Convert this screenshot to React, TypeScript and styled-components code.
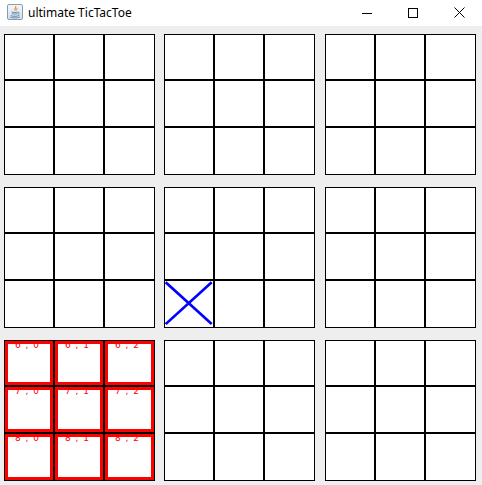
import React from 'react';
import styled, { createGlobalStyle } from 'styled-components';

const Global = createGlobalStyle`
  html, body { margin: 0; padding: 0; background: #eeeeee; }
  body { width: 482px; height: 485px; overflow: hidden; font-family: "Noto Sans", sans-serif; }
`;

const Window = styled.div`
  width: 482px;
  height: 485px;
  display: flex;
  flex-direction: column;
  background: #eeeeee;
`;

const TitleBar = styled.div`
  height: 26px;
  flex-shrink: 0;
  background: #ffffff;
  display: flex;
  align-items: center;
`;

const AppIcon = styled.svg`
  width: 16px;
  height: 16px;
  margin-left: 7px;
  margin-top: -2px;
  flex-shrink: 0;
`;

const Title = styled.span`
  margin-left: 5px;
  margin-top: -1px;
  font-family: "Noto Sans", "Open Sans", sans-serif;
  font-size: 12px;
  color: #000000;
  flex: 1;
`;

const Controls = styled.div`
  display: flex;
  align-self: flex-start;
`;

const CtrlButton = styled.div`
  width: 46px;
  height: 25px;
  display: flex;
  align-items: center;
  justify-content: center;
  svg { display: block; }
`;

const Board = styled.div`
  display: grid;
  grid-template-columns: 160px 161px 151px;
  grid-template-rows: repeat(3, 141px);
  row-gap: 12px;
  padding: 8px 0 0 4px;
`;

const SubBoard = styled.div`
  width: 151px;
  height: 141px;
  display: grid;
  grid-template-columns: 50px 50px 51px;
  grid-template-rows: 46px 47px 48px;
`;

const Cell = styled.div<{ $active?: boolean }>`
  box-sizing: border-box;
  border: 1px solid #000000;
  background: #ffffff;
  position: relative;
  overflow: hidden;
  ${(p) =>
    p.$active
      ? `&::after {
          content: "";
          position: absolute;
          inset: 0;
          border: 3px solid #ff0000;
          pointer-events: none;
        }`
      : ''}
`;

const CellLabel = styled.div`
  font-family: "DejaVu Sans", sans-serif;
  font-size: 9px;
  line-height: 9px;
  word-spacing: 2px;
  color: #ff0000;
  padding-left: 10px;
  white-space: pre;
`;

const Mark = styled.svg`
  display: block;
  width: 100%;
  height: 100%;
`;

const XMark = () => (
  <Mark viewBox="0 0 48 46" preserveAspectRatio="none">
    <line x1="0.7" y1="1.3" x2="46.7" y2="43" stroke="#0000ff" strokeWidth="2.6" />
    <line x1="46.7" y1="1.3" x2="0.7" y2="43" stroke="#0000ff" strokeWidth="2.6" />
  </Mark>
);

const JavaIcon = () => (
  <AppIcon viewBox="0 0 16 16">
    <defs>
      <linearGradient id="jbg" x1="0" y1="0" x2="0" y2="1">
        <stop offset="0" stopColor="#f4f7fb" />
        <stop offset="1" stopColor="#d5dfea" />
      </linearGradient>
    </defs>
    <rect x="0.5" y="0.5" width="15" height="15" rx="1.5" fill="url(#jbg)" stroke="#8a9bb0" />
    <path d="M8.6 2.2 C10 3.6 7 4.6 8.2 6.4 C6.6 5.2 9.4 4.2 8.6 2.2 Z" fill="#e76f00" stroke="#e76f00" strokeWidth="0.6" />
    <path d="M10.3 4 C9.4 4.8 9.8 5.6 9.2 6.5" fill="none" stroke="#e76f00" strokeWidth="0.8" />
    <path d="M4.5 8 C6.5 8.6 9.5 8.6 11 8" fill="none" stroke="#5382a1" strokeWidth="0.9" />
    <path d="M4.8 9.6 C6.6 10.2 9.2 10.2 10.6 9.6" fill="none" stroke="#5382a1" strokeWidth="0.9" />
    <path d="M3.6 11.6 C6 12.6 10 12.6 12.4 11.4" fill="none" stroke="#5382a1" strokeWidth="0.9" />
    <path d="M11 8.2 C12.6 8 12.8 9.8 10.8 10.4" fill="none" stroke="#5382a1" strokeWidth="0.8" />
    <path d="M3.2 13.2 C6 14.2 10 14.2 13 13" fill="none" stroke="#5382a1" strokeWidth="0.8" />
  </AppIcon>
);

type CellState = { label?: string; mark?: 'X' };

const buildBoard = (bi: number): CellState[] => {
  const cells: CellState[] = [];
  const bRow = Math.floor(bi / 3);
  const bCol = bi % 3;
  for (let r = 0; r < 3; r++) {
    for (let c = 0; c < 3; c++) {
      const state: CellState = {};
      if (bi === 6) state.label = `${bRow * 3 + r} , ${bCol * 3 + c}`;
      if (bi === 4 && r === 2 && c === 0) state.mark = 'X';
      cells.push(state);
    }
  }
  return cells;
};

export default function App() {
  const boards = Array.from({ length: 9 }, (_, i) => buildBoard(i));
  return (
    <>
      <Global />
      <Window>
        <TitleBar>
          <JavaIcon />
          <Title>ultimate TicTacToe</Title>
          <Controls>
            <CtrlButton>
              <svg width="10" height="10" viewBox="0 0 10 10">
                <line x1="0" y1="5.5" x2="10" y2="5.5" stroke="#000" strokeWidth="1" />
              </svg>
            </CtrlButton>
            <CtrlButton>
              <svg width="10" height="10" viewBox="0 0 10 10">
                <rect x="0.5" y="0.5" width="9" height="9" fill="none" stroke="#000" strokeWidth="1" />
              </svg>
            </CtrlButton>
            <CtrlButton>
              <svg width="11" height="11" viewBox="0 0 11 11">
                <line x1="0.5" y1="0.5" x2="10.5" y2="10.5" stroke="#000" strokeWidth="1" />
                <line x1="10.5" y1="0.5" x2="0.5" y2="10.5" stroke="#000" strokeWidth="1" />
              </svg>
            </CtrlButton>
          </Controls>
        </TitleBar>
        <Board>
          {boards.map((cells, bi) => (
            <SubBoard key={bi}>
              {cells.map((cell, ci) => (
                <Cell key={ci} $active={bi === 6}>
                  {cell.label && <CellLabel>{cell.label}</CellLabel>}
                  {cell.mark === 'X' && <XMark />}
                </Cell>
              ))}
            </SubBoard>
          ))}
        </Board>
      </Window>
    </>
  );
}
